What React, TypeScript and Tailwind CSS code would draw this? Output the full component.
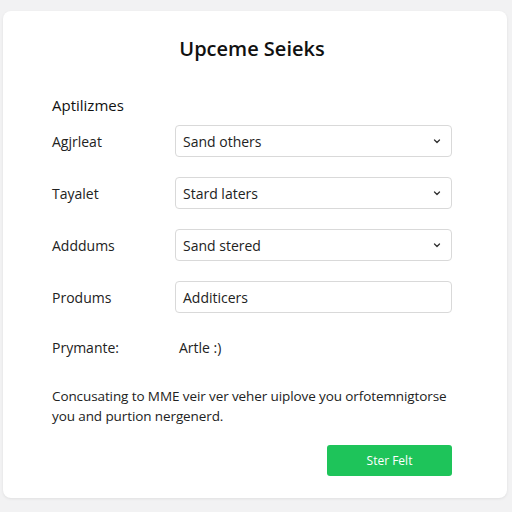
import React from "react";

const Chevron = () => (
  <svg width="10" height="10" viewBox="0 0 10 10" fill="none" stroke="#333" strokeWidth="1.3" strokeLinecap="round" strokeLinejoin="round">
    <path d="M2.5 4 L5 6.5 L7.5 4" />
  </svg>
);

function SelectBox({ value }: { value: string }) {
  return (
    <div className="flex h-[32px] w-[277px] items-center justify-between rounded-[4px] border border-[#d9d9d9] bg-white pl-[7px] pr-[9px] text-[14px] text-[#222]">
      <span>{value}</span>
      <Chevron />
    </div>
  );
}

function Row({ label, children }: { label: string; children: React.ReactNode }) {
  return (
    <div className="flex h-[32px] items-center">
      <div className="w-[123px] text-[14px] text-[#222]">{label}</div>
      {children}
    </div>
  );
}

export default function App() {
  return (
    <div
      className="flex h-[512px] w-[512px] bg-[#f2f2f3] pl-[3px] pr-[5px] pt-[11px] pb-[14px]"
      style={{ fontFamily: '"Open Sans", "Noto Sans", sans-serif' }}
    >
      <div className="flex flex-1 flex-col rounded-[8px] bg-white pl-[49px] pr-[55px] shadow-[0_1px_3px_rgba(0,0,0,0.08)]">
        <div className="mt-[26px] text-center text-[20px] font-semibold leading-[24px] text-[#111]">Upceme Seieks</div>
        <div className="mt-[34px] text-[15px] font-medium leading-[20px] text-[#111]">Aptilizmes</div>
        <div className="mt-[10px] flex flex-col gap-[20px]">
          <Row label="Agjrleat"><SelectBox value="Sand others" /></Row>
          <Row label="Tayalet"><SelectBox value="Stard laters" /></Row>
          <Row label="Adddums"><SelectBox value="Sand stered" /></Row>
          <Row label="Produms">
            <div className="flex h-[32px] w-[277px] items-center rounded-[4px] border border-[#d9d9d9] bg-white pl-[7px] text-[14px] text-[#222]">Additicers</div>
          </Row>
        </div>
        <div className="mt-[18px] flex h-[32px] items-center">
          <div className="w-[127px] text-[14px] text-[#222]">Prymante:</div>
          <div className="text-[14px] text-[#222]">Artle :)</div>
        </div>
        <div className="mt-[23px] text-[13.5px] leading-[20px] tracking-[-0.1px] text-[#222]">
          Concusating to MME veir ver veher uiplove you orfotemnigtorse you and purtion nergenerd.
        </div>
        <div className="mt-[19px] flex justify-end">
          <button className="flex h-[31px] w-[125px] items-center justify-center rounded-[3px] bg-[#1ec45a] text-[12px] font-medium text-white">
            Ster Felt
          </button>
        </div>
      </div>
    </div>
  );
}
